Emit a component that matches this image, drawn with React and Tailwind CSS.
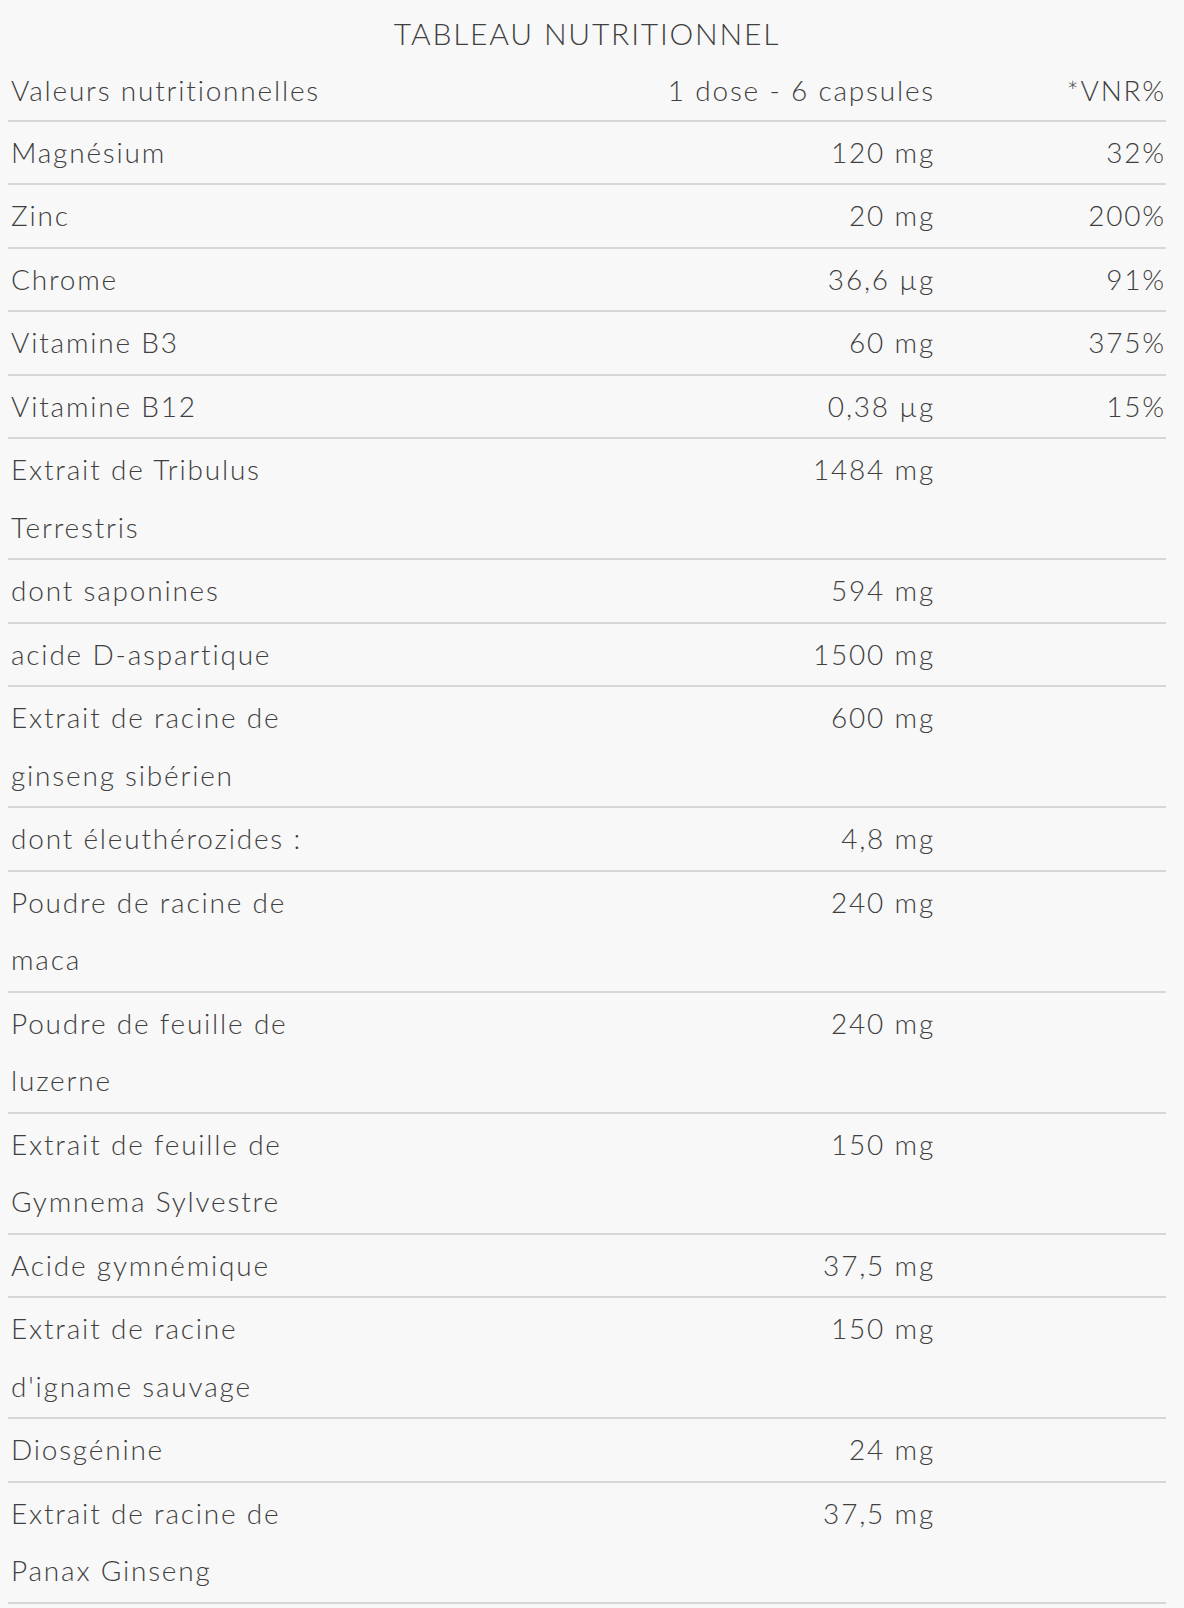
import React from "react";

const rows = [
  ["Magnésium", "120 mg", "32%"],
  ["Zinc", "20 mg", "200%"],
  ["Chrome", "36,6 µg", "91%"],
  ["Vitamine B3", "60 mg", "375%"],
  ["Vitamine B12", "0,38 µg", "15%"],
  ["Extrait de Tribulus Terrestris", "1484 mg", ""],
  ["dont saponines", "594 mg", ""],
  ["acide D-aspartique", "1500 mg", ""],
  ["Extrait de racine de ginseng sibérien", "600 mg", ""],
  ["dont éleuthérozides :", "4,8 mg", ""],
  ["Poudre de racine de maca", "240 mg", ""],
  ["Poudre de feuille de luzerne", "240 mg", ""],
  ["Extrait de feuille de Gymnema Sylvestre", "150 mg", ""],
  ["Acide gymnémique", "37,5 mg", ""],
  ["Extrait de racine d'igname sauvage", "150 mg", ""],
  ["Diosgénine", "24 mg", ""],
  ["Extrait de racine de Panax Ginseng", "37,5 mg", ""],
];

function Row({ a, b, c, header }) {
  return (
    <div
      className={
        header
          ? "grid grid-cols-[330px_1fr_230px] border-b-2 border-[#d7d7db] pt-[4px] pb-0 leading-[57.5px]"
          : "grid grid-cols-[330px_1fr_230px] border-b-2 border-[#d7d7db] py-[2px] leading-[57.5px]"
      }
    >
      <div className="px-[3px]">{a}</div>
      <div className="pl-[3px] pr-[1px] text-right">{b}</div>
      <div className="text-right">{c}</div>
    </div>
  );
}

export default function App() {
  return (
    <div
      className="min-h-[1608px] w-[1184px] bg-[#f8f8f8] text-[#3f3f3f] text-[28px] font-light tracking-[1.8px]"
      style={{ fontFamily: "Lato, 'Open Sans', sans-serif" }}
    >
      <div className="ml-[8px] w-[1158px]">
        <div className="h-[58px] pt-[4px] text-center text-[30px] leading-[58px]">TABLEAU NUTRITIONNEL</div>
        <Row a="Valeurs nutritionnelles" b="1 dose - 6 capsules" c="*VNR%" header />
        {rows.map((r, i) => (
          <Row key={i} a={r[0]} b={r[1]} c={r[2]} />
        ))}
      </div>
    </div>
  );
}
